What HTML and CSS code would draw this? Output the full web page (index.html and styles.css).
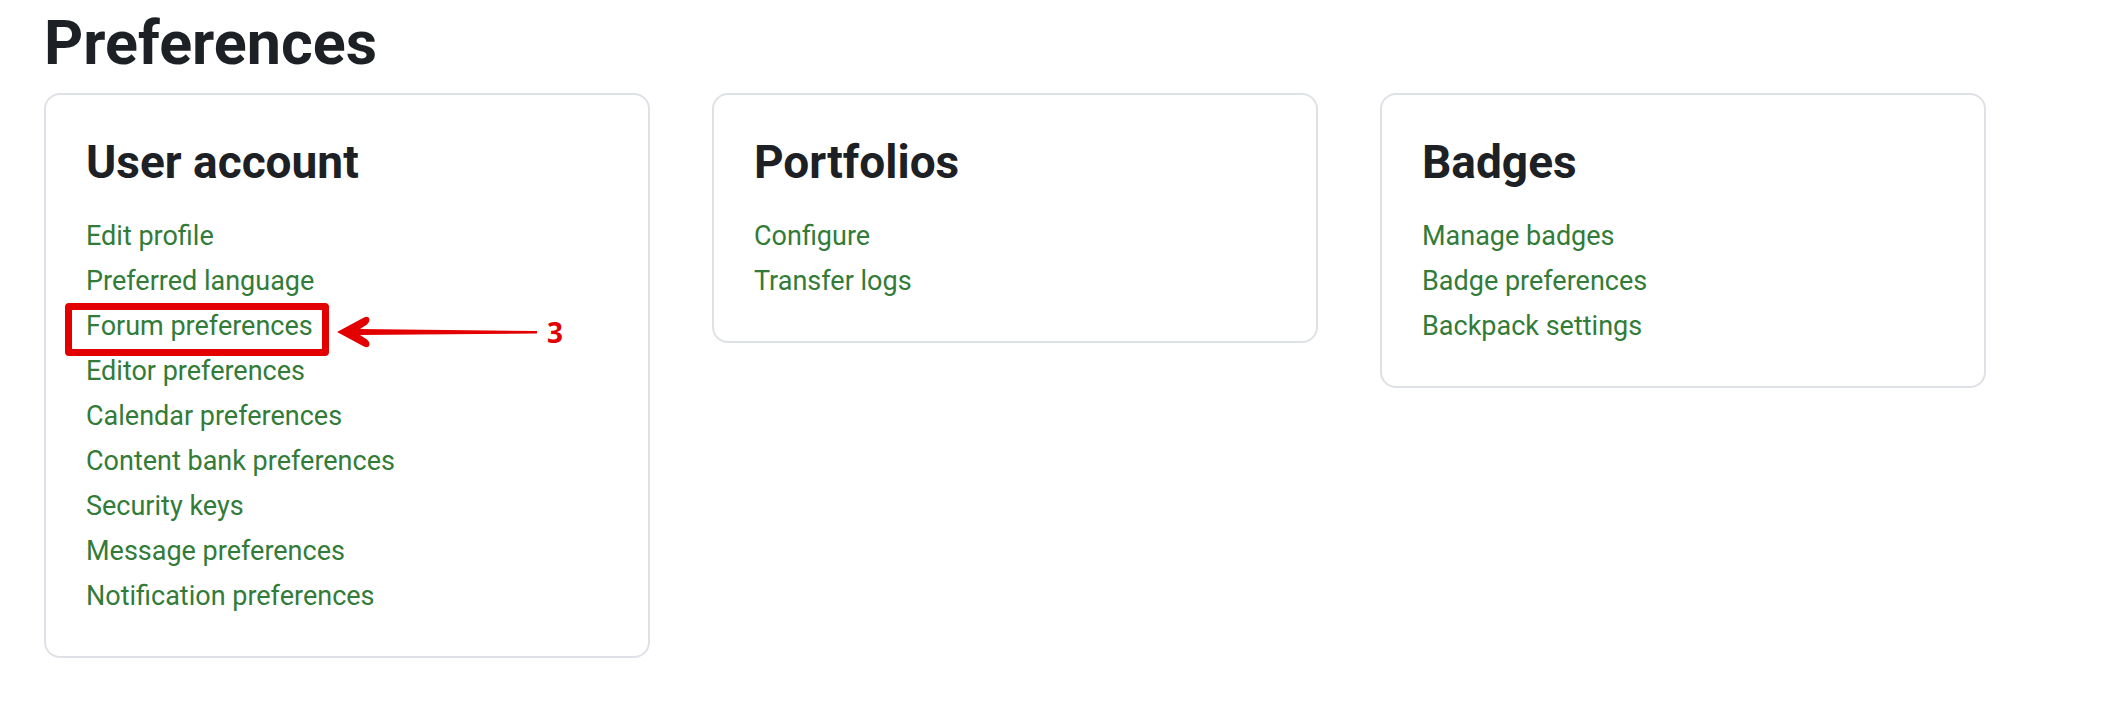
FILE: index.html
```html
<!DOCTYPE html>
<html lang="en">
<head>
    <meta charset="UTF-8">
    <meta name="viewport" content="width=device-width, initial-scale=1.0">
    <title>Preferences</title>
    <link rel="stylesheet" href="styles.css">
</head>
<body>
    <div class="page">
        <h2 class="page-title">Preferences</h2>

        <div class="card-grid">
            <!-- User account -->
            <div class="card">
                <h3 class="card-title">User account</h3>
                <ul class="links">
                    <li><a href="#">Edit profile</a></li>
                    <li><a href="#">Preferred language</a></li>
                    <li class="marked">
                        <a href="#">Forum preferences</a>
                        <span class="mark-box"></span>
                        <span class="callout">
                            <svg class="arrow" width="200" height="36" viewBox="0 0 200 36">
                                <path d="M0 18 L27 3.5 Q32 1.5 32.5 5.5 Q32.5 8.5 30 10.5 L23 15 L200 17 L200 19.5 L23 21 L30 25.5 Q32.5 27.5 32.5 30.5 Q32 34.5 27 32.5 Z" fill="#e30000"/>
                            </svg>
                            <span class="callout-num">3</span>
                        </span>
                    </li>
                    <li><a href="#">Editor preferences</a></li>
                    <li><a href="#">Calendar preferences</a></li>
                    <li><a href="#">Content bank preferences</a></li>
                    <li><a href="#">Security keys</a></li>
                    <li><a href="#">Message preferences</a></li>
                    <li><a href="#">Notification preferences</a></li>
                </ul>
            </div>

            <!-- Portfolios -->
            <div class="card">
                <h3 class="card-title">Portfolios</h3>
                <ul class="links">
                    <li><a href="#">Configure</a></li>
                    <li><a href="#">Transfer logs</a></li>
                </ul>
            </div>

            <!-- Badges -->
            <div class="card">
                <h3 class="card-title">Badges</h3>
                <ul class="links">
                    <li><a href="#">Manage badges</a></li>
                    <li><a href="#">Badge preferences</a></li>
                    <li><a href="#">Backpack settings</a></li>
                </ul>
            </div>
        </div>
    </div>
</body>
</html>
```

FILE: styles.css
```css
body { margin: 0; background-color: #ffffff; font-family: Roboto, "Liberation Sans", Arial, sans-serif; color: #1d2125; }
.page { padding: 7px 44px 0 44px; }
.page-title { font-size: 61px; font-weight: bold; line-height: 1.2; margin: 0 0 13px 0; }
.card-grid { display: grid; grid-template-columns: repeat(3, 606px); gap: 62px; align-items: start; }
.card { border: 2px solid #dee2e6; border-radius: 16px; padding: 40px 40px 37px 40px; }
.card-title { font-size: 46px; font-weight: bold; line-height: 1.2; margin: 0 0 24px 0; }
.links { list-style: none; margin: 0; padding: 0; }
.links li { font-size: 27px; line-height: 45px; }
.links a { color: #327b38; text-decoration: none; }

/* annotation on the forum link */
.marked { position: relative; }
.mark-box { position: absolute; left: -21px; top: -1px; width: 250px; height: 39px; border: 7px solid #e30000; border-radius: 4px; }
.callout { position: absolute; left: 251px; top: 10px; display: flex; align-items: center; gap: 10px; }
.arrow { display: block; }
.callout-num { color: #e30000; font-family: "Open Sans", "Liberation Sans", sans-serif; font-weight: bold; font-size: 28px; line-height: 36px; }
```
